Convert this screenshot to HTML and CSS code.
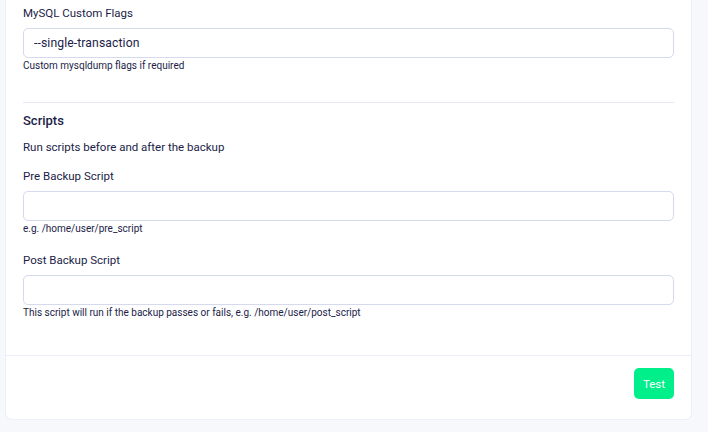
FILE: index.html
```html
<!DOCTYPE html>
<html>
<head>
<meta charset="utf-8">
<link rel="stylesheet" href="styles.css">
</head>
<body>
<div class="page">
  <div class="card">
    <div class="body">
      <div class="field first">
        <label class="label">MySQL Custom Flags</label>
        <div class="input">--single-transaction</div>
        <div class="help">Custom mysqldump flags if required</div>
      </div>
      <hr class="divider">
      <h3 class="section-title">Scripts</h3>
      <p class="section-desc">Run scripts before and after the backup</p>
      <div class="field pre">
        <label class="label">Pre Backup Script</label>
        <div class="input"></div>
        <div class="help">e.g. /home/user/pre_script</div>
      </div>
      <div class="field post">
        <label class="label">Post Backup Script</label>
        <div class="input"></div>
        <div class="help">This script will run if the backup passes or fails, e.g. /home/user/post_script</div>
      </div>
    </div>
    <div class="footer">
      <button class="btn">Test</button>
    </div>
  </div>
</div>
</body>
</html>
```
FILE: styles.css
```css
* { box-sizing: border-box; }
html, body { margin: 0; padding: 0; }
body {
  background: #f7f8fc;
  font-family: Roboto, "Noto Sans", sans-serif;
  color: #211d48;
  width: 708px;
  height: 432px;
  overflow: hidden;
}
.page {
  padding: 0 16px 0 5px;
}
.card {
  background: #fff;
  border: 1px solid #eceef8;
  border-top: 0;
  border-radius: 0 0 7px 7px;
  width: 687px;
}
.body {
  padding: 4px 17px 0 17px;
}
.field { display: flex; flex-direction: column; }
.label {
  font-size: 11.5px;
  line-height: 18px;
  display: block;
}
.input {
  margin-top: 6px;
  height: 30px;
  border: 1px solid #d5daec;
  border-radius: 5px;
  font-size: 12.2px;
  line-height: 28px;
  padding: 0 10px;
  letter-spacing: 0.1px;
  color: #211d48;
}
.help {
  font-size: 10px;
  line-height: 14px;
  margin-top: 1px;
  color: #211d48;
}
.divider {
  border: 0;
  border-top: 1px solid #e6e8f4;
  margin: 29px 0 0 0;
}
.section-title {
  font-size: 13px;
  font-weight: 500;
  line-height: 20px;
  margin: 8px 0 0 0;
}
.section-desc {
  font-size: 11.5px;
  line-height: 18px;
  margin: 7px 0 0 0;
}
.field.first { margin-top: 0; }
.field.pre { margin-top: 11px; }
.field.post { margin-top: 15px; }
.footer {
  margin-top: 35px;
  border-top: 1px solid #ecedf8;
  padding: 12px 17px 20px 17px;
  display: flex;
  justify-content: flex-end;
}
.btn {
  background: #00ef8b;
  color: #fff;
  border: 0;
  border-radius: 5px;
  width: 40px;
  height: 31px;
  font-family: Roboto, "Noto Sans", sans-serif;
  font-size: 11.5px;
  padding: 0;
}
```
